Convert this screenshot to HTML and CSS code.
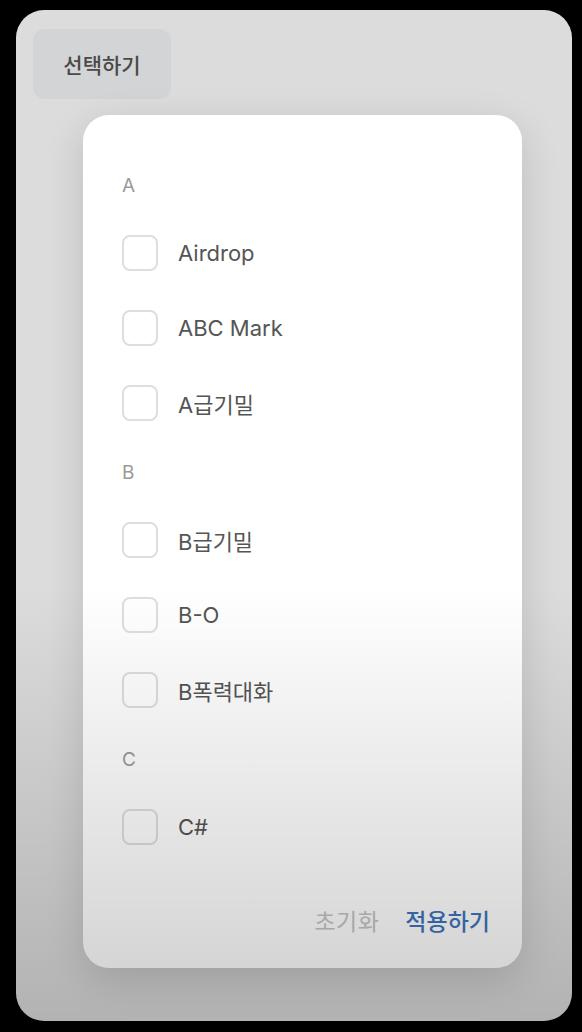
FILE: index.html
```html
<!DOCTYPE html>
<html lang="ko">

<head>
    <meta charset="UTF-8">
    <meta name="viewport" content="width=device-width, initial-scale=1.0">
    <title>선택하기</title>
    <link rel="stylesheet" href="styles.css">
</head>

<body>
    <div class="phone">
        <button class="open-button">선택하기</button>

        <div class="sheet">
            <div class="section">
                <div class="section-title">A</div>
                <label class="option"><span class="box"></span>Airdrop</label>
                <label class="option"><span class="box"></span>ABC Mark</label>
                <label class="option"><span class="box"></span>A급기밀</label>
            </div>

            <div class="section">
                <div class="section-title">B</div>
                <label class="option"><span class="box"></span>B급기밀</label>
                <label class="option"><span class="box"></span>B-O</label>
                <label class="option"><span class="box"></span>B폭력대화</label>
            </div>

            <div class="section">
                <div class="section-title">C</div>
                <label class="option"><span class="box"></span>C#</label>
            </div>

            <div class="sheet-footer">
                <span class="reset">초기화</span>
                <span class="apply">적용하기</span>
            </div>
        </div>
    </div>
</body>

</html>
```

FILE: styles.css
```css
body {
    background-color: #000;
    margin: 0;
    font-family: Inter, "Noto Sans CJK KR", sans-serif;
}

.phone {
    position: relative;
    width: 556px;
    height: 1011px;
    margin: 10px 0 0 16px;
    background-color: #dcdcdc;
    border-radius: 28px;
    overflow: hidden;
    display: flex;
    flex-direction: column;
    align-items: flex-start;
}

/* dim that darkens the lower part of the screen */
.phone::after {
    content: "";
    position: absolute;
    top: 0;
    left: 0;
    right: 0;
    bottom: 0;
    background: linear-gradient(to bottom, rgba(0, 0, 0, 0) 57%, rgba(0, 0, 0, 0.19) 100%);
    pointer-events: none;
}

.open-button {
    margin: 19px 0 0 17px;
    width: 138px;
    height: 70px;
    border: none;
    border-radius: 12px;
    background-color: #d3d4d6;
    color: #4a4a4a;
    font-family: inherit;
    font-size: 21px;
    font-weight: 500;
}

.sheet {
    margin: 16px 0 0 67px;
    width: 439px;
    height: 853px;
    box-sizing: border-box;
    padding: 59px 32px 31px 39px;
    background-color: #fff;
    border-radius: 26px;
    box-shadow: 0 12px 40px rgba(0, 0, 0, 0.14);
    display: flex;
    flex-direction: column;
}

.section {
    margin-bottom: 20px;
}

.section-title {
    height: 24px;
    line-height: 24px;
    margin-bottom: 18px;
    font-size: 19px;
    color: #9a9a9a;
}

.option {
    height: 75px;
    display: flex;
    align-items: center;
    gap: 20px;
    font-size: 22px;
    color: #555;
    margin-top: -1px;
    margin-bottom: 1px;
}

.box {
    width: 36px;
    height: 36px;
    box-sizing: border-box;
    border: 2px solid #dedede;
    border-radius: 8px;
}

.sheet-footer {
    margin-top: auto;
    display: flex;
    justify-content: flex-end;
    gap: 26px;
    font-size: 23px;
    line-height: 30px;
}

.reset {
    color: #c4c4c4;
    letter-spacing: 0.5px;
}

.apply {
    color: #3d74bd;
    font-weight: 500;
}
```
